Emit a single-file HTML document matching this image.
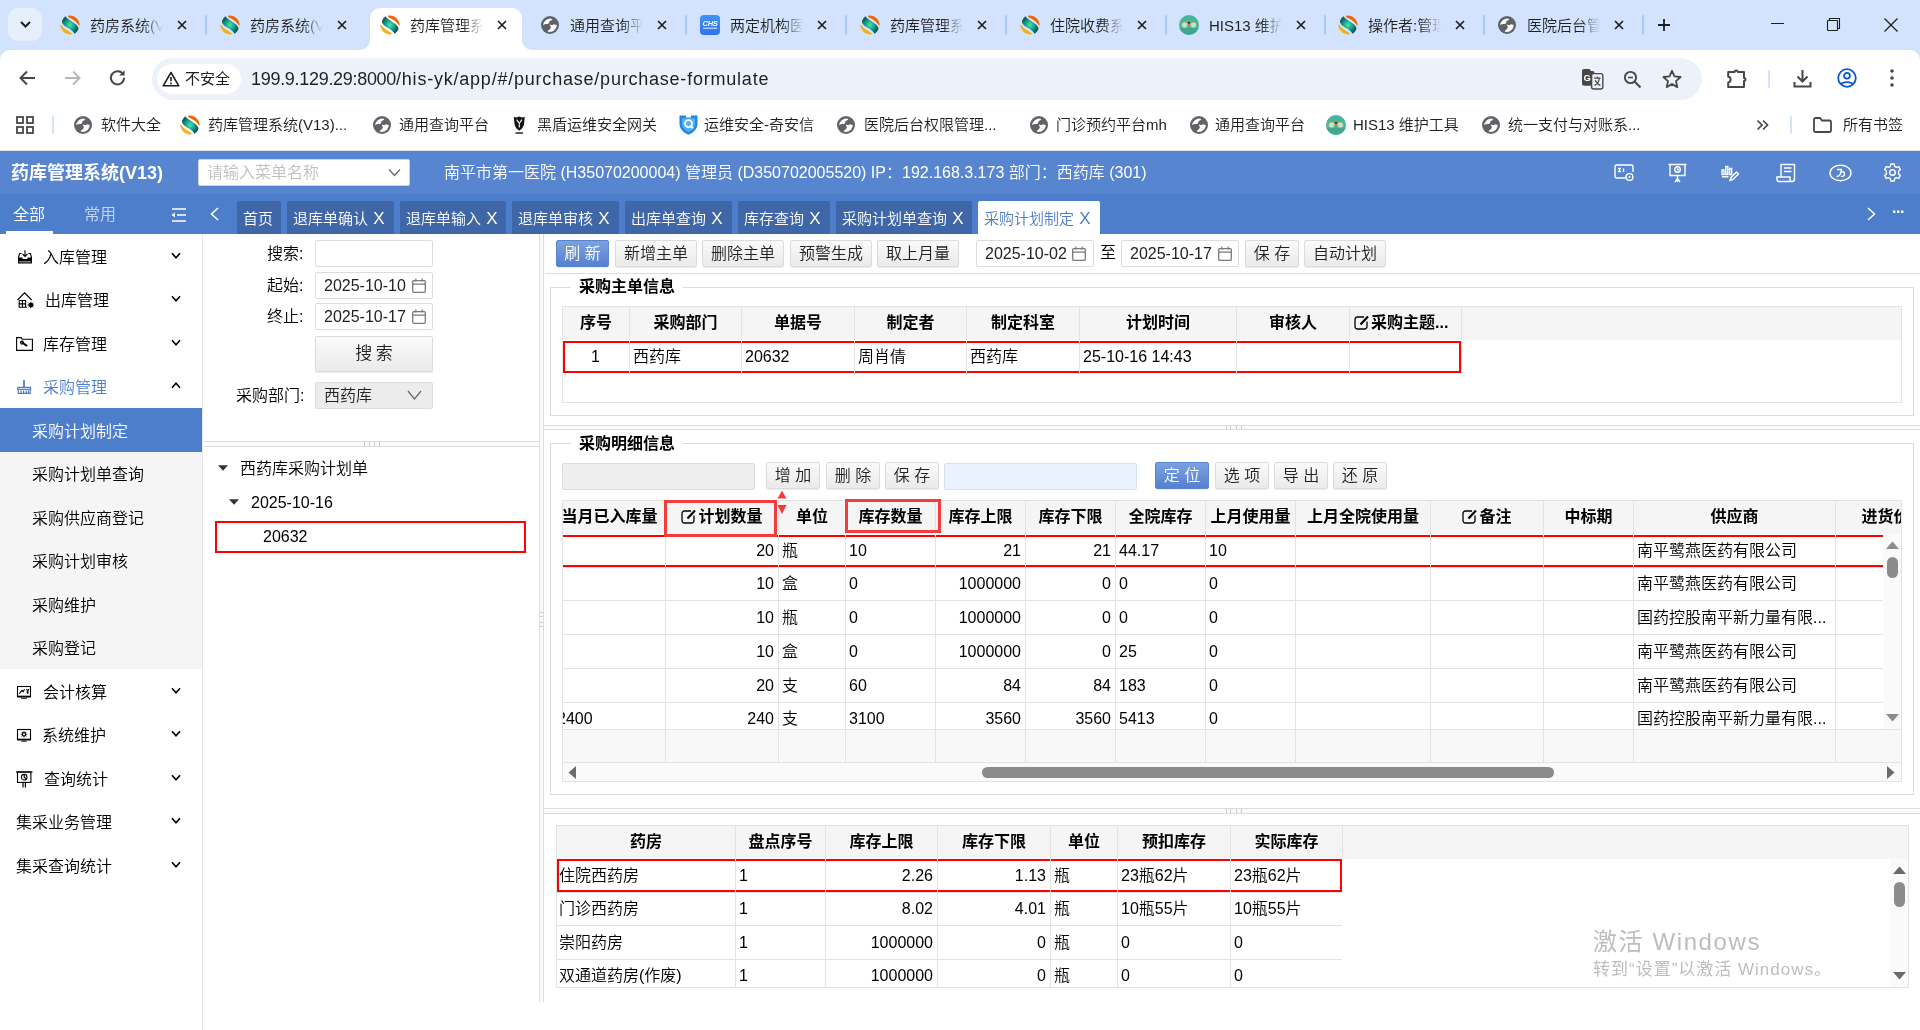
<!DOCTYPE html>
<html lang="zh-CN">
<head>
<meta charset="utf-8">
<title>药库管理系统(V13)</title>
<style>
*{box-sizing:border-box;margin:0;padding:0}
html,body{width:1920px;height:1030px;overflow:hidden;background:#fff}
body{position:relative;font-family:"Liberation Sans","Noto Sans CJK SC",sans-serif;font-size:16px;color:#000;font-weight:350}
.abs{position:absolute}
.t{position:absolute;white-space:nowrap;line-height:20px}
svg{position:absolute;overflow:visible}
/* chrome */
#tabstrip{position:absolute;left:0;top:0;width:1920px;height:62px;background:#d3e3fd}
#toolbar{position:absolute;left:0;top:50px;width:1920px;height:101px;background:#fff;border-top-left-radius:10px;border-top-right-radius:10px}
.ctab{position:absolute;top:0;height:50px;font-size:15px;color:#1f1f1f;font-weight:350}
.ctab .ti{position:absolute;top:16px;left:30px;width:73px;height:20px;line-height:20px;overflow:hidden;white-space:nowrap;-webkit-mask-image:linear-gradient(90deg,#000 72%,transparent 100%);mask-image:linear-gradient(90deg,#000 72%,transparent 100%)}
.sep{position:absolute;top:15px;width:2px;height:20px;background:#a8c7fa;border-radius:1px}
.bm{position:absolute;top:115px;height:20px;line-height:20px;font-size:15px;color:#1f1f1f;white-space:nowrap;font-weight:350}
/* app */
#hdr{position:absolute;left:0;top:151px;width:1920px;height:43px;background:#5885d0}
#tabbar{position:absolute;left:0;top:194px;width:1920px;height:40px;background:#4d7ecb}
.atab{position:absolute;top:201px;height:33px;background:#3f67a8;color:#fff;font-size:15px;line-height:35px;white-space:nowrap;padding-left:6px;border-radius:2px 2px 0 0}
.atab.on{background:#fff;color:#4d7ecb}
#side{position:absolute;left:0;top:234px;width:203px;height:796px;background:#fff;border-right:1px solid #e6e6e6}
.mi{position:absolute;left:0;width:202px;height:43px;line-height:43px;font-size:16px;color:#000;white-space:nowrap}
.mi .tx{position:absolute;left:43px;top:0}
.smi{position:absolute;left:0;width:202px;height:43px;line-height:43px;font-size:16px;padding-left:32px;white-space:nowrap}
.btn{position:absolute;height:27px;line-height:25px;border:1px solid #dcdcdc;border-radius:2px;background:linear-gradient(#fafafa,#eaeaea);font-size:16px;color:#222;text-align:center;white-space:nowrap;box-shadow:0 1px 1px rgba(0,0,0,.08)}
.btn.pri{background:linear-gradient(#7ba1e1,#5481ce);border-color:#5a85cf;color:#fff}
.inp{position:absolute;height:27px;line-height:25px;border:1px solid #dcdcdc;border-radius:2px;background:#fff;font-size:16px;color:#222;padding-left:8px;white-space:nowrap}
.th{position:absolute;top:0;height:100%;font-weight:700;text-align:center;border-right:1px solid #e3e3e3;white-space:nowrap;overflow:hidden;color:#000}
.td{position:absolute;top:0;height:100%;border-right:1px solid #e3e3e3;white-space:nowrap;overflow:hidden;padding:0 4px 0 3px}
.r{text-align:right}
.row{position:absolute;left:0;border-bottom:1px solid #e3e3e3}
</style>
</head>
<body>
<div id="root" style="position:absolute;left:0;top:0;width:1920px;height:1030px;will-change:transform">
<div id="tabstrip"></div>
<div class="abs" style="left:8px;top:8px;width:34px;height:33px;border-radius:10px;background:#e6eefc"></div>
<svg style="left:19px;top:20px" width="13" height="9" viewBox="0 0 13 9"><path d="M2 2 L6.5 6.5 L11 2" stroke="#1f1f1f" stroke-width="2" fill="none"/></svg>
<div class="abs" style="left:370px;top:8px;width:152px;height:42px;background:#fff;border-radius:10px 10px 0 0"></div>
<svg style="left:360px;top:40px" width="10" height="10" viewBox="0 0 10 10"><path d="M10 0 V10 H0 A10 10 0 0 0 10 0Z" fill="#fff"/></svg>
<svg style="left:522px;top:40px" width="10" height="10" viewBox="0 0 10 10"><path d="M0 0 V10 H10 A10 10 0 0 1 0 0Z" fill="#fff"/></svg>
<svg style="left:60px;top:15px" width="20" height="20" viewBox="0 0 20 20"><defs><radialGradient id="g0" cx="49%" cy="50%" r="52%"><stop offset="0" stop-color="#46e6b4"/><stop offset="0.45" stop-color="#1fa88e"/><stop offset="1" stop-color="#065560"/></radialGradient></defs><path d="M7.6 0.9 C12 -0.6 18.5 2.5 19.7 9.2 L19.2 11 C18 8.5 15.5 6 11 3.6 C9.5 2.8 8.2 2 7.6 0.9Z" fill="#ef6606"/><path d="M12.4 19.1 C8 20.6 1.5 17.5 0.3 10.8 L0.8 9 C2 11.5 4.5 14 9 16.4 C10.5 17.2 11.8 18 12.4 19.1Z" fill="#f4b01c"/><path d="M5.7 1.3 C6.2 3 8 4.2 11.7 6.4 C15 8.3 17.8 10 18.5 13.2 C18 15.5 16.5 17.5 14.3 18.7 C14 17 12 15.5 8.7 13.2 C5.5 11.5 2.5 10 1.9 6.4 C2.5 4.5 3.8 2.5 5.7 1.3Z" fill="url(#g0)"/></svg>
<div class="ctab" style="left:60px;width:140px"><div class="ti">药房系统(V13)</div></div>
<svg style="left:177px;top:20px" width="10" height="10" viewBox="0 0 10 10"><path d="M1 1 L9 9 M9 1 L1 9" stroke="#1f1f1f" stroke-width="1.7" fill="none"/></svg>
<svg style="left:220px;top:15px" width="20" height="20" viewBox="0 0 20 20"><defs><radialGradient id="g1" cx="49%" cy="50%" r="52%"><stop offset="0" stop-color="#46e6b4"/><stop offset="0.45" stop-color="#1fa88e"/><stop offset="1" stop-color="#065560"/></radialGradient></defs><path d="M7.6 0.9 C12 -0.6 18.5 2.5 19.7 9.2 L19.2 11 C18 8.5 15.5 6 11 3.6 C9.5 2.8 8.2 2 7.6 0.9Z" fill="#ef6606"/><path d="M12.4 19.1 C8 20.6 1.5 17.5 0.3 10.8 L0.8 9 C2 11.5 4.5 14 9 16.4 C10.5 17.2 11.8 18 12.4 19.1Z" fill="#f4b01c"/><path d="M5.7 1.3 C6.2 3 8 4.2 11.7 6.4 C15 8.3 17.8 10 18.5 13.2 C18 15.5 16.5 17.5 14.3 18.7 C14 17 12 15.5 8.7 13.2 C5.5 11.5 2.5 10 1.9 6.4 C2.5 4.5 3.8 2.5 5.7 1.3Z" fill="url(#g1)"/></svg>
<div class="ctab" style="left:220px;width:140px"><div class="ti">药房系统(V13)</div></div>
<svg style="left:337px;top:20px" width="10" height="10" viewBox="0 0 10 10"><path d="M1 1 L9 9 M9 1 L1 9" stroke="#1f1f1f" stroke-width="1.7" fill="none"/></svg>
<svg style="left:380px;top:15px" width="20" height="20" viewBox="0 0 20 20"><defs><radialGradient id="g2" cx="49%" cy="50%" r="52%"><stop offset="0" stop-color="#46e6b4"/><stop offset="0.45" stop-color="#1fa88e"/><stop offset="1" stop-color="#065560"/></radialGradient></defs><path d="M7.6 0.9 C12 -0.6 18.5 2.5 19.7 9.2 L19.2 11 C18 8.5 15.5 6 11 3.6 C9.5 2.8 8.2 2 7.6 0.9Z" fill="#ef6606"/><path d="M12.4 19.1 C8 20.6 1.5 17.5 0.3 10.8 L0.8 9 C2 11.5 4.5 14 9 16.4 C10.5 17.2 11.8 18 12.4 19.1Z" fill="#f4b01c"/><path d="M5.7 1.3 C6.2 3 8 4.2 11.7 6.4 C15 8.3 17.8 10 18.5 13.2 C18 15.5 16.5 17.5 14.3 18.7 C14 17 12 15.5 8.7 13.2 C5.5 11.5 2.5 10 1.9 6.4 C2.5 4.5 3.8 2.5 5.7 1.3Z" fill="url(#g2)"/></svg>
<div class="ctab" style="left:380px;width:140px"><div class="ti">药库管理系统</div></div>
<svg style="left:497px;top:20px" width="10" height="10" viewBox="0 0 10 10"><path d="M1 1 L9 9 M9 1 L1 9" stroke="#1f1f1f" stroke-width="1.7" fill="none"/></svg>
<svg style="left:541px;top:16px" width="18" height="18" viewBox="0 0 18 18"><circle cx="9" cy="9" r="9" fill="#5f6368"/><path d="M2 9 C2.4 6 4.8 3.4 8.4 2.4 L11.4 3 C10.4 4.6 9.4 4.6 8.6 5.2 C7.8 5.9 8.6 6.8 7.6 7.6 C6.4 8.4 4.4 7.8 2 9Z" fill="#fff"/><path d="M6.6 15.4 C7.4 13.4 9.6 13.6 9.8 11.6 C9.9 10.2 8.6 9.6 8.8 8.6 C10 9.2 11.8 9.4 12.8 8.2 L15.8 9 C15.6 12.8 12.4 16 8.6 16Z" fill="#fff"/></svg>
<div class="ctab" style="left:540px;width:140px"><div class="ti">通用查询平台</div></div>
<svg style="left:657px;top:20px" width="10" height="10" viewBox="0 0 10 10"><path d="M1 1 L9 9 M9 1 L1 9" stroke="#1f1f1f" stroke-width="1.7" fill="none"/></svg>
<svg style="left:700px;top:15px" width="20" height="20" viewBox="0 0 20 20"><defs><linearGradient id="lg700" x1="0" y1="0" x2="0" y2="1"><stop offset="0" stop-color="#3f93f7"/><stop offset="1" stop-color="#3271ea"/></linearGradient></defs><rect x="0" y="0" width="20" height="20" rx="4" fill="url(#lg700)"/><text x="10" y="10.6" text-anchor="middle" font-family="Liberation Sans,sans-serif" font-size="7.5" font-weight="700" font-style="italic" fill="#fff" letter-spacing="-0.3">CHS</text><rect x="3" y="12.6" width="14" height="1.4" fill="#cfe2ff" opacity="0.8"/></svg>
<div class="ctab" style="left:700px;width:140px"><div class="ti">两定机构医保</div></div>
<svg style="left:817px;top:20px" width="10" height="10" viewBox="0 0 10 10"><path d="M1 1 L9 9 M9 1 L1 9" stroke="#1f1f1f" stroke-width="1.7" fill="none"/></svg>
<svg style="left:860px;top:15px" width="20" height="20" viewBox="0 0 20 20"><defs><radialGradient id="g5" cx="49%" cy="50%" r="52%"><stop offset="0" stop-color="#46e6b4"/><stop offset="0.45" stop-color="#1fa88e"/><stop offset="1" stop-color="#065560"/></radialGradient></defs><path d="M7.6 0.9 C12 -0.6 18.5 2.5 19.7 9.2 L19.2 11 C18 8.5 15.5 6 11 3.6 C9.5 2.8 8.2 2 7.6 0.9Z" fill="#ef6606"/><path d="M12.4 19.1 C8 20.6 1.5 17.5 0.3 10.8 L0.8 9 C2 11.5 4.5 14 9 16.4 C10.5 17.2 11.8 18 12.4 19.1Z" fill="#f4b01c"/><path d="M5.7 1.3 C6.2 3 8 4.2 11.7 6.4 C15 8.3 17.8 10 18.5 13.2 C18 15.5 16.5 17.5 14.3 18.7 C14 17 12 15.5 8.7 13.2 C5.5 11.5 2.5 10 1.9 6.4 C2.5 4.5 3.8 2.5 5.7 1.3Z" fill="url(#g5)"/></svg>
<div class="ctab" style="left:860px;width:140px"><div class="ti">药库管理系统</div></div>
<svg style="left:977px;top:20px" width="10" height="10" viewBox="0 0 10 10"><path d="M1 1 L9 9 M9 1 L1 9" stroke="#1f1f1f" stroke-width="1.7" fill="none"/></svg>
<svg style="left:1020px;top:15px" width="20" height="20" viewBox="0 0 20 20"><defs><radialGradient id="g6" cx="49%" cy="50%" r="52%"><stop offset="0" stop-color="#46e6b4"/><stop offset="0.45" stop-color="#1fa88e"/><stop offset="1" stop-color="#065560"/></radialGradient></defs><path d="M7.6 0.9 C12 -0.6 18.5 2.5 19.7 9.2 L19.2 11 C18 8.5 15.5 6 11 3.6 C9.5 2.8 8.2 2 7.6 0.9Z" fill="#ef6606"/><path d="M12.4 19.1 C8 20.6 1.5 17.5 0.3 10.8 L0.8 9 C2 11.5 4.5 14 9 16.4 C10.5 17.2 11.8 18 12.4 19.1Z" fill="#f4b01c"/><path d="M5.7 1.3 C6.2 3 8 4.2 11.7 6.4 C15 8.3 17.8 10 18.5 13.2 C18 15.5 16.5 17.5 14.3 18.7 C14 17 12 15.5 8.7 13.2 C5.5 11.5 2.5 10 1.9 6.4 C2.5 4.5 3.8 2.5 5.7 1.3Z" fill="url(#g6)"/></svg>
<div class="ctab" style="left:1020px;width:140px"><div class="ti">住院收费系统</div></div>
<svg style="left:1137px;top:20px" width="10" height="10" viewBox="0 0 10 10"><path d="M1 1 L9 9 M9 1 L1 9" stroke="#1f1f1f" stroke-width="1.7" fill="none"/></svg>
<svg style="left:1179px;top:15px" width="20" height="20" viewBox="0 0 20 20"><circle cx="10" cy="10" r="10" fill="#45b59b"/><path d="M0.6 13 A10 10 0 0 0 19.4 13Z" fill="#3ea88f"/><path d="M7 8 H13 V10.5 H7Z" fill="#e8742a"/><path d="M9 7 H11 V8.4 H9Z" fill="#222"/><circle cx="5.6" cy="10" r="3" fill="#a4f0e2" stroke="#d98a3a" stroke-width="0.7"/><circle cx="14.4" cy="10" r="3" fill="#a4f0e2" stroke="#d98a3a" stroke-width="0.7"/></svg>
<div class="ctab" style="left:1179px;width:140px"><div class="ti">HIS13 维护</div></div>
<svg style="left:1296px;top:20px" width="10" height="10" viewBox="0 0 10 10"><path d="M1 1 L9 9 M9 1 L1 9" stroke="#1f1f1f" stroke-width="1.7" fill="none"/></svg>
<svg style="left:1338px;top:15px" width="20" height="20" viewBox="0 0 20 20"><defs><radialGradient id="g8" cx="49%" cy="50%" r="52%"><stop offset="0" stop-color="#46e6b4"/><stop offset="0.45" stop-color="#1fa88e"/><stop offset="1" stop-color="#065560"/></radialGradient></defs><path d="M7.6 0.9 C12 -0.6 18.5 2.5 19.7 9.2 L19.2 11 C18 8.5 15.5 6 11 3.6 C9.5 2.8 8.2 2 7.6 0.9Z" fill="#ef6606"/><path d="M12.4 19.1 C8 20.6 1.5 17.5 0.3 10.8 L0.8 9 C2 11.5 4.5 14 9 16.4 C10.5 17.2 11.8 18 12.4 19.1Z" fill="#f4b01c"/><path d="M5.7 1.3 C6.2 3 8 4.2 11.7 6.4 C15 8.3 17.8 10 18.5 13.2 C18 15.5 16.5 17.5 14.3 18.7 C14 17 12 15.5 8.7 13.2 C5.5 11.5 2.5 10 1.9 6.4 C2.5 4.5 3.8 2.5 5.7 1.3Z" fill="url(#g8)"/></svg>
<div class="ctab" style="left:1338px;width:140px"><div class="ti">操作者:管理员</div></div>
<svg style="left:1455px;top:20px" width="10" height="10" viewBox="0 0 10 10"><path d="M1 1 L9 9 M9 1 L1 9" stroke="#1f1f1f" stroke-width="1.7" fill="none"/></svg>
<svg style="left:1498px;top:16px" width="18" height="18" viewBox="0 0 18 18"><circle cx="9" cy="9" r="9" fill="#5f6368"/><path d="M2 9 C2.4 6 4.8 3.4 8.4 2.4 L11.4 3 C10.4 4.6 9.4 4.6 8.6 5.2 C7.8 5.9 8.6 6.8 7.6 7.6 C6.4 8.4 4.4 7.8 2 9Z" fill="#fff"/><path d="M6.6 15.4 C7.4 13.4 9.6 13.6 9.8 11.6 C9.9 10.2 8.6 9.6 8.8 8.6 C10 9.2 11.8 9.4 12.8 8.2 L15.8 9 C15.6 12.8 12.4 16 8.6 16Z" fill="#fff"/></svg>
<div class="ctab" style="left:1497px;width:140px"><div class="ti">医院后台管理</div></div>
<svg style="left:1614px;top:20px" width="10" height="10" viewBox="0 0 10 10"><path d="M1 1 L9 9 M9 1 L1 9" stroke="#1f1f1f" stroke-width="1.7" fill="none"/></svg>
<div class="sep" style="left:205px"></div>
<div class="sep" style="left:685px"></div>
<div class="sep" style="left:845px"></div>
<div class="sep" style="left:1005px"></div>
<div class="sep" style="left:1165px"></div>
<div class="sep" style="left:1324px"></div>
<div class="sep" style="left:1483px"></div>
<div class="sep" style="left:1642px"></div>
<svg style="left:1657px;top:18px" width="14" height="14" viewBox="0 0 14 14"><path d="M7 1 V13 M1 7 H13" stroke="#1f1f1f" stroke-width="1.8" fill="none"/></svg>
<div class="abs" style="left:1771px;top:23px;width:13px;height:1px;background:#1f1f1f"></div>
<svg style="left:1827px;top:18px" width="13" height="13" viewBox="0 0 13 13"><rect x="0.5" y="2.5" width="10" height="10" rx="0.6" fill="none" stroke="#1f1f1f" stroke-width="1.1"/><path d="M2.5 2.5 V0.5 H12.5 V10.5 H10.5" fill="none" stroke="#1f1f1f" stroke-width="1.1"/></svg>
<svg style="left:1884px;top:18px" width="14" height="14" viewBox="0 0 14 14"><path d="M0.5 0.5 L13.5 13.5 M13.5 0.5 L0.5 13.5" stroke="#1f1f1f" stroke-width="1.3" fill="none"/></svg>
<div id="toolbar"></div>
<svg style="left:19px;top:70px" width="17" height="16" viewBox="0 0 17 16"><path d="M16 8 H2 M8 1.5 L1.5 8 L8 14.5" stroke="#474747" stroke-width="2" fill="none"/></svg>
<svg style="left:64px;top:70px" width="17" height="16" viewBox="0 0 17 16"><path d="M1 8 H15 M9 1.5 L15.5 8 L9 14.5" stroke="#b5b8bd" stroke-width="2" fill="none"/></svg>
<svg style="left:109px;top:69px" width="17" height="17" viewBox="0 0 17 17"><path d="M14.2 5.5 A6.6 6.6 0 1 0 15.1 8.8" stroke="#474747" stroke-width="2" fill="none"/><path d="M15.6 1.2 V6.6 H10.2Z" fill="#474747"/></svg>
<div class="abs" style="left:152px;top:58px;width:1550px;height:42px;border-radius:21px;background:#edf2fa"></div>
<div class="abs" style="left:157px;top:64px;width:84px;height:30px;border-radius:15px;background:#fff"></div>
<svg style="left:162px;top:71px" width="18" height="16" viewBox="0 0 18 16"><path d="M9 1.5 L16.8 14.8 H1.2Z" stroke="#1f1f1f" stroke-width="1.6" fill="none" stroke-linejoin="round"/><path d="M9 6 V10.2 M9 11.6 V13.2" stroke="#1f1f1f" stroke-width="1.6"/></svg>
<div class="t" style="left:185px;top:69px;font-size:15px;color:#1f1f1f;font-weight:400">不安全</div>
<div class="t" style="left:251px;top:67px;font-size:18px;line-height:24px;color:#1f1f1f;font-weight:400;"><span style="letter-spacing:-0.3px">199.9.129.29:8000</span><span style="letter-spacing:0.78px">/his-yk/app/#/purchase/purchase-formulate</span></div>
<svg style="left:1582px;top:69px" width="22" height="21" viewBox="0 0 22 21"><path d="M2 0 H7.5 L9 2 H10.5 A2 2 0 0 1 12.5 4 V14.5 L14.5 16.8 H2 A2 2 0 0 1 0 14.8 V2 A2 2 0 0 1 2 0Z" fill="#474747"/><text x="1.6" y="12.2" font-size="9.5" font-weight="700" fill="#fff" font-family="Liberation Sans,sans-serif">G</text><rect x="9.6" y="4.6" width="11.2" height="15.4" rx="2" fill="#edf2fa" stroke="#474747" stroke-width="1.4"/><path d="M12 9.2 H18.6 M15.3 7.6 V9.2 M12.6 16.4 C15.4 15 17 12.4 17.4 9.2 M13.2 11.2 C14.2 13.4 16.2 15.6 18.4 16.6" stroke="#474747" stroke-width="1.2" fill="none"/></svg>
<svg style="left:1623px;top:70px" width="19" height="19" viewBox="0 0 19 19"><circle cx="7.5" cy="7.5" r="5.6" stroke="#474747" stroke-width="1.9" fill="none"/><path d="M11.8 11.8 L17.5 17.5" stroke="#474747" stroke-width="2"/><path d="M5 7.5 H10" stroke="#474747" stroke-width="1.6"/></svg>
<svg style="left:1662px;top:69px" width="20" height="20" viewBox="0 0 20 20"><path d="M10 1.8 L12.5 7.4 L18.6 8 L14 12.1 L15.3 18.1 L10 15 L4.7 18.1 L6 12.1 L1.4 8 L7.5 7.4Z" stroke="#474747" stroke-width="1.8" fill="none" stroke-linejoin="round"/></svg>
<svg style="left:1726px;top:67px" width="22" height="22" viewBox="0 0 22 22"><path d="M2.2 5 H8.6 A1.6 1.6 0 0 1 11.8 5 H18 V11 A1.5 1.5 0 0 1 18 14 V20 H2.2 V15.4 C5.4 15.4 5.4 9.8 2.2 9.8 Z" stroke="#474747" stroke-width="2" fill="none" stroke-linejoin="round"/></svg>
<div class="abs" style="left:1768px;top:70px;width:2px;height:18px;background:#d3e3fd;border-radius:1px"></div>
<svg style="left:1793px;top:69px" width="19" height="19" viewBox="0 0 19 19"><path d="M9.5 1 V12 M4.5 7.5 L9.5 12.5 L14.5 7.5" stroke="#474747" stroke-width="2" fill="none"/><path d="M1.5 13 V17.5 H17.5 V13" stroke="#474747" stroke-width="2" fill="none"/></svg>
<svg style="left:1837px;top:68px" width="20" height="20" viewBox="0 0 20 20"><circle cx="10" cy="10" r="8.8" stroke="#0b57d0" stroke-width="1.8" fill="none"/><circle cx="10" cy="7.8" r="2.9" stroke="#0b57d0" stroke-width="1.8" fill="none"/><path d="M4 16.2 C5.5 13.4 14.5 13.4 16 16.2" stroke="#0b57d0" stroke-width="1.8" fill="none"/></svg>
<svg style="left:1890px;top:69px" width="4" height="18" viewBox="0 0 4 18"><circle cx="2" cy="2" r="1.8" fill="#474747"/><circle cx="2" cy="9" r="1.8" fill="#474747"/><circle cx="2" cy="16" r="1.8" fill="#474747"/></svg>
<svg style="left:16px;top:116px" width="18" height="18" viewBox="0 0 18 18"><g fill="none" stroke="#474747" stroke-width="1.8"><rect x="1" y="1" width="6" height="6"/><rect x="11" y="1" width="6" height="6"/><rect x="1" y="11" width="6" height="6"/><rect x="11" y="11" width="6" height="6"/></g></svg>
<div class="abs" style="left:52px;top:116px;width:2px;height:18px;background:#d3e3fd;border-radius:1px"></div>
<svg style="left:74px;top:116px" width="18" height="18" viewBox="0 0 18 18"><circle cx="9" cy="9" r="9" fill="#5f6368"/><path d="M2 9 C2.4 6 4.8 3.4 8.4 2.4 L11.4 3 C10.4 4.6 9.4 4.6 8.6 5.2 C7.8 5.9 8.6 6.8 7.6 7.6 C6.4 8.4 4.4 7.8 2 9Z" fill="#fff"/><path d="M6.6 15.4 C7.4 13.4 9.6 13.6 9.8 11.6 C9.9 10.2 8.6 9.6 8.8 8.6 C10 9.2 11.8 9.4 12.8 8.2 L15.8 9 C15.6 12.8 12.4 16 8.6 16Z" fill="#fff"/></svg>
<div class="bm" style="left:101px">软件大全</div>
<svg style="left:180px;top:115px" width="20" height="20" viewBox="0 0 20 20"><defs><radialGradient id="g21" cx="49%" cy="50%" r="52%"><stop offset="0" stop-color="#46e6b4"/><stop offset="0.45" stop-color="#1fa88e"/><stop offset="1" stop-color="#065560"/></radialGradient></defs><path d="M7.6 0.9 C12 -0.6 18.5 2.5 19.7 9.2 L19.2 11 C18 8.5 15.5 6 11 3.6 C9.5 2.8 8.2 2 7.6 0.9Z" fill="#ef6606"/><path d="M12.4 19.1 C8 20.6 1.5 17.5 0.3 10.8 L0.8 9 C2 11.5 4.5 14 9 16.4 C10.5 17.2 11.8 18 12.4 19.1Z" fill="#f4b01c"/><path d="M5.7 1.3 C6.2 3 8 4.2 11.7 6.4 C15 8.3 17.8 10 18.5 13.2 C18 15.5 16.5 17.5 14.3 18.7 C14 17 12 15.5 8.7 13.2 C5.5 11.5 2.5 10 1.9 6.4 C2.5 4.5 3.8 2.5 5.7 1.3Z" fill="url(#g21)"/></svg>
<div class="bm" style="left:208px">药库管理系统(V13)...</div>
<svg style="left:373px;top:116px" width="18" height="18" viewBox="0 0 18 18"><circle cx="9" cy="9" r="9" fill="#5f6368"/><path d="M2 9 C2.4 6 4.8 3.4 8.4 2.4 L11.4 3 C10.4 4.6 9.4 4.6 8.6 5.2 C7.8 5.9 8.6 6.8 7.6 7.6 C6.4 8.4 4.4 7.8 2 9Z" fill="#fff"/><path d="M6.6 15.4 C7.4 13.4 9.6 13.6 9.8 11.6 C9.9 10.2 8.6 9.6 8.8 8.6 C10 9.2 11.8 9.4 12.8 8.2 L15.8 9 C15.6 12.8 12.4 16 8.6 16Z" fill="#fff"/></svg>
<div class="bm" style="left:399px">通用查询平台</div>
<svg style="left:513px;top:116px" width="13" height="19" viewBox="0 0 13 19"><path d="M0.8 0.8 C2.8 2 4.8 1.4 6.3 0.6 C7.8 1.4 9.8 2 11.8 0.8 L11 8.6 C10.4 11.4 8.4 13.6 6.3 14.8 C4.2 13.6 2.2 11.4 1.6 8.6Z" fill="#111"/><path d="M3.6 3.6 L6.3 7.4 L9 3.6 M6.3 7.4 V11.6" stroke="#fff" stroke-width="1.1" fill="none"/><path d="M2.5 17 H10" stroke="#333" stroke-width="1.6"/></svg>
<div class="bm" style="left:537px">黑盾运维安全网关</div>
<svg style="left:679px;top:115px" width="19" height="20" viewBox="0 0 19 20"><path d="M0.5 0.5 H7 V2.4 H12 V0.5 H18.5 V9 C18.5 14 14 18 9.5 19.7 C5 18 0.5 14 0.5 9Z" fill="#1e88e5"/><path d="M3 3.2 H16 V9 C16 12.5 13 15.5 9.5 17 C6 15.5 3 12.5 3 9Z" fill="#55b0f5"/><circle cx="9.5" cy="8.6" r="3.5" stroke="#fff" stroke-width="1.8" fill="none"/><path d="M11.6 10.8 L14 13.4" stroke="#fff" stroke-width="1.8"/></svg>
<div class="bm" style="left:704px">运维安全-奇安信</div>
<svg style="left:837px;top:116px" width="18" height="18" viewBox="0 0 18 18"><circle cx="9" cy="9" r="9" fill="#5f6368"/><path d="M2 9 C2.4 6 4.8 3.4 8.4 2.4 L11.4 3 C10.4 4.6 9.4 4.6 8.6 5.2 C7.8 5.9 8.6 6.8 7.6 7.6 C6.4 8.4 4.4 7.8 2 9Z" fill="#fff"/><path d="M6.6 15.4 C7.4 13.4 9.6 13.6 9.8 11.6 C9.9 10.2 8.6 9.6 8.8 8.6 C10 9.2 11.8 9.4 12.8 8.2 L15.8 9 C15.6 12.8 12.4 16 8.6 16Z" fill="#fff"/></svg>
<div class="bm" style="left:864px">医院后台权限管理...</div>
<svg style="left:1030px;top:116px" width="18" height="18" viewBox="0 0 18 18"><circle cx="9" cy="9" r="9" fill="#5f6368"/><path d="M2 9 C2.4 6 4.8 3.4 8.4 2.4 L11.4 3 C10.4 4.6 9.4 4.6 8.6 5.2 C7.8 5.9 8.6 6.8 7.6 7.6 C6.4 8.4 4.4 7.8 2 9Z" fill="#fff"/><path d="M6.6 15.4 C7.4 13.4 9.6 13.6 9.8 11.6 C9.9 10.2 8.6 9.6 8.8 8.6 C10 9.2 11.8 9.4 12.8 8.2 L15.8 9 C15.6 12.8 12.4 16 8.6 16Z" fill="#fff"/></svg>
<div class="bm" style="left:1056px">门诊预约平台mh</div>
<svg style="left:1190px;top:116px" width="18" height="18" viewBox="0 0 18 18"><circle cx="9" cy="9" r="9" fill="#5f6368"/><path d="M2 9 C2.4 6 4.8 3.4 8.4 2.4 L11.4 3 C10.4 4.6 9.4 4.6 8.6 5.2 C7.8 5.9 8.6 6.8 7.6 7.6 C6.4 8.4 4.4 7.8 2 9Z" fill="#fff"/><path d="M6.6 15.4 C7.4 13.4 9.6 13.6 9.8 11.6 C9.9 10.2 8.6 9.6 8.8 8.6 C10 9.2 11.8 9.4 12.8 8.2 L15.8 9 C15.6 12.8 12.4 16 8.6 16Z" fill="#fff"/></svg>
<div class="bm" style="left:1215px">通用查询平台</div>
<svg style="left:1326px;top:115px" width="20" height="20" viewBox="0 0 20 20"><circle cx="10" cy="10" r="10" fill="#45b59b"/><path d="M0.6 13 A10 10 0 0 0 19.4 13Z" fill="#3ea88f"/><path d="M7 8 H13 V10.5 H7Z" fill="#e8742a"/><path d="M9 7 H11 V8.4 H9Z" fill="#222"/><circle cx="5.6" cy="10" r="3" fill="#a4f0e2" stroke="#d98a3a" stroke-width="0.7"/><circle cx="14.4" cy="10" r="3" fill="#a4f0e2" stroke="#d98a3a" stroke-width="0.7"/></svg>
<div class="bm" style="left:1353px">HIS13 维护工具</div>
<svg style="left:1482px;top:116px" width="18" height="18" viewBox="0 0 18 18"><circle cx="9" cy="9" r="9" fill="#5f6368"/><path d="M2 9 C2.4 6 4.8 3.4 8.4 2.4 L11.4 3 C10.4 4.6 9.4 4.6 8.6 5.2 C7.8 5.9 8.6 6.8 7.6 7.6 C6.4 8.4 4.4 7.8 2 9Z" fill="#fff"/><path d="M6.6 15.4 C7.4 13.4 9.6 13.6 9.8 11.6 C9.9 10.2 8.6 9.6 8.8 8.6 C10 9.2 11.8 9.4 12.8 8.2 L15.8 9 C15.6 12.8 12.4 16 8.6 16Z" fill="#fff"/></svg>
<div class="bm" style="left:1508px">统一支付与对账系...</div>
<svg style="left:1756px;top:119px" width="13" height="12" viewBox="0 0 13 12"><path d="M1.5 1.5 L6 6 L1.5 10.5 M7 1.5 L11.5 6 L7 10.5" stroke="#474747" stroke-width="1.7" fill="none"/></svg>
<div class="abs" style="left:1790px;top:116px;width:2px;height:18px;background:#d3e3fd;border-radius:1px"></div>
<svg style="left:1813px;top:117px" width="19" height="16" viewBox="0 0 19 16"><path d="M1 2.5 A1.5 1.5 0 0 1 2.5 1 H7 L9 3.5 H16.5 A1.5 1.5 0 0 1 18 5 V13.5 A1.5 1.5 0 0 1 16.5 15 H2.5 A1.5 1.5 0 0 1 1 13.5Z" stroke="#474747" stroke-width="1.8" fill="none"/></svg>
<div class="bm" style="left:1843px">所有书签</div>
<div class="abs" style="left:0;top:150px;width:1920px;height:1px;background:#dfe1e5"></div>
<div id="hdr"></div>
<div class="t" style="left:11px;top:161px;font-size:18px;line-height:24px;font-weight:700;color:#fff">药库管理系统(V13)</div>
<div class="abs" style="left:198px;top:159px;width:212px;height:27px;background:#fff;border:1px solid #d2d2d2;border-radius:2px"></div>
<div class="t" style="left:207px;top:163px;color:#c0c0c0;font-size:16px">请输入菜单名称</div>
<svg style="left:388px;top:168px" width="13" height="9" viewBox="0 0 13 9"><path d="M1 1.5 L6.5 7.5 L12 1.5" stroke="#666" stroke-width="1.2" fill="none"/></svg>
<div class="t" style="left:444px;top:163px;color:#fff;font-size:16px;letter-spacing:0px">南平市第一医院 (H35070200004) 管理员 (D350702005520) IP：192.168.3.173 部门：西药库 (301)</div>
<svg style="left:1614px;top:164px" width="20" height="18" viewBox="0 0 20 18"><path d="M12 14 H2.5 A1.5 1.5 0 0 1 1 12.5 V2.5 A1.5 1.5 0 0 1 2.5 1 H17.5 A1.5 1.5 0 0 1 19 2.5 V8" stroke="#fff" stroke-width="1.4" fill="none"/><path d="M4 4.5 H7 M4 7.5 H7 M5.5 4.5 V7.5 M9.5 4.5 V8" stroke="#fff" stroke-width="1.4" fill="none"/><circle cx="15.5" cy="13" r="3.4" stroke="#fff" stroke-width="1.4" fill="none"/><circle cx="15.5" cy="13" r="1" fill="#fff"/></svg>
<svg style="left:1668px;top:163px" width="19" height="20" viewBox="0 0 19 20"><path d="M0.5 1.5 H18.5 M2 1.5 V12.5 H17 V1.5 M9.5 12.5 V19 M7 19 L9.5 15.5 L12 19" stroke="#fff" stroke-width="1.4" fill="none"/><circle cx="9.5" cy="6.5" r="2.8" stroke="#fff" stroke-width="1.4" fill="none"/><path d="M9.5 5 V6.8 H11" stroke="#fff" stroke-width="1.4" fill="none"/></svg>
<svg style="left:1721px;top:164px" width="19" height="19" viewBox="0 0 19 19"><path d="M1 6 H3 V10.5 H1Z M4.8 2.5 H6.8 V10.5 H4.8Z M8.6 4.5 H10.6 V10.5 H8.6Z M1 12.8 H7.5" stroke="#fff" stroke-width="1.4" fill="none"/><path d="M9 16.5 L10 13.5 L15.5 8 L17.5 10 L12 15.5 Z" stroke="#fff" stroke-width="1.4" fill="none"/></svg>
<svg style="left:1776px;top:163px" width="20" height="20" viewBox="0 0 20 20"><path d="M5 14 V1.5 H18.5 V16 A2.5 2.5 0 0 1 16 18.5 H3 A2 2 0 0 1 1 16.5 V14 H14 V16.5 A2 2 0 0 0 16 18.5" stroke="#fff" stroke-width="1.4" fill="none"/><path d="M8 5 H15.5 M8 8.5 H15.5" stroke="#fff" stroke-width="1.4" fill="none"/></svg>
<svg style="left:1829px;top:164px" width="23" height="18" viewBox="0 0 23 18"><ellipse cx="11.5" cy="9" rx="10.5" ry="7.8" stroke="#fff" stroke-width="1.4" fill="none"/><path d="M8 5.5 H13 M7.5 12.5 C10.5 12.5 12 11 12.5 5.5 M11 8.5 C13 7 15.5 7.5 15.5 10 C15.5 12 13.5 13 12 12" stroke="#fff" stroke-width="1.4" fill="none"/></svg>
<svg style="left:1883px;top:163px" width="19" height="19" viewBox="0 0 19 19"><circle cx="9.5" cy="9.5" r="2.8" stroke="#fff" stroke-width="1.4" fill="none"/><path d="M7.8 1 H11.2 L11.7 3.4 L13.4 4.4 L15.7 3.6 L17.4 6.5 L15.6 8.1 V10.9 L17.4 12.5 L15.7 15.4 L13.4 14.6 L11.7 15.6 L11.2 18 H7.8 L7.3 15.6 L5.6 14.6 L3.3 15.4 L1.6 12.5 L3.4 10.9 V8.1 L1.6 6.5 L3.3 3.6 L5.6 4.4 L7.3 3.4Z" stroke="#fff" stroke-width="1.4" fill="none" stroke-linejoin="round"/></svg>
<div id="tabbar"></div>
<div class="t" style="left:13px;top:205px;color:#fff;font-size:16px">全部</div>
<div class="t" style="left:84px;top:205px;color:#c9d8f0;font-size:16px">常用</div>
<div class="abs" style="left:6px;top:231px;width:47px;height:3px;background:#fff"></div>
<svg style="left:171px;top:208px" width="16" height="14" viewBox="0 0 16 14"><path d="M1 1 H15 M6 7 H15 M1 13 H15" stroke="#fff" stroke-width="1.6" fill="none"/><path d="M0.5 7 L4 4.5 V9.5Z" fill="#fff"/></svg>
<svg style="left:210px;top:207px" width="9" height="14" viewBox="0 0 9 14"><path d="M8 1 L1.5 7 L8 13" stroke="#fff" stroke-width="1.5" fill="none"/></svg>
<div class="atab" style="left:237px;width:44px">首页</div>
<div class="atab" style="left:287px;width:107px">退库单确认 <span style="font-size:17px;margin-left:1px">X</span></div>
<div class="atab" style="left:400px;width:106px">退库单输入 <span style="font-size:17px;margin-left:1px">X</span></div>
<div class="atab" style="left:512px;width:107px">退库单审核 <span style="font-size:17px;margin-left:1px">X</span></div>
<div class="atab" style="left:625px;width:107px">出库单查询 <span style="font-size:17px;margin-left:1px">X</span></div>
<div class="atab" style="left:738px;width:92px">库存查询 <span style="font-size:17px;margin-left:1px">X</span></div>
<div class="atab" style="left:836px;width:136px">采购计划单查询 <span style="font-size:17px;margin-left:1px">X</span></div>
<div class="atab on" style="left:978px;width:122px">采购计划制定 <span style="font-size:17px;margin-left:1px">X</span></div>
<svg style="left:1867px;top:207px" width="9" height="14" viewBox="0 0 9 14"><path d="M1 1 L7.5 7 L1 13" stroke="#fff" stroke-width="1.5" fill="none"/></svg>
<div class="t" style="left:1892px;top:202px;color:#fff;font-size:16px;letter-spacing:-1.3px;font-weight:700">···</div>
<div id="side"></div>
<div class="abs" style="left:0;top:408px;width:202px;height:261px;background:#f5f5f5"></div>
<div class="abs" style="left:0;top:408px;width:202px;height:44px;background:#4d7ecb"></div>
<div class="t" style="left:43px;top:248px;color:#000">入库管理</div>
<svg style="left:171px;top:252px" width="10" height="7" viewBox="0 0 10 7"><path d="M1 1.2 L5 5.8 L9 1.2" stroke="#000" stroke-width="1.6" fill="none"/></svg>
<div class="t" style="left:45px;top:291px;color:#000">出库管理</div>
<svg style="left:171px;top:295px" width="10" height="7" viewBox="0 0 10 7"><path d="M1 1.2 L5 5.8 L9 1.2" stroke="#000" stroke-width="1.6" fill="none"/></svg>
<div class="t" style="left:43px;top:335px;color:#000">库存管理</div>
<svg style="left:171px;top:339px" width="10" height="7" viewBox="0 0 10 7"><path d="M1 1.2 L5 5.8 L9 1.2" stroke="#000" stroke-width="1.6" fill="none"/></svg>
<div class="t" style="left:43px;top:378px;color:#4d7ecb">采购管理</div>
<svg style="left:171px;top:382px" width="10" height="7" viewBox="0 0 10 7"><path d="M1 5.8 L5 1.2 L9 5.8" stroke="#000" stroke-width="1.6" fill="none"/></svg>
<div class="t" style="left:43px;top:683px;color:#000">会计核算</div>
<svg style="left:171px;top:687px" width="10" height="7" viewBox="0 0 10 7"><path d="M1 1.2 L5 5.8 L9 1.2" stroke="#000" stroke-width="1.6" fill="none"/></svg>
<div class="t" style="left:42px;top:726px;color:#000">系统维护</div>
<svg style="left:171px;top:730px" width="10" height="7" viewBox="0 0 10 7"><path d="M1 1.2 L5 5.8 L9 1.2" stroke="#000" stroke-width="1.6" fill="none"/></svg>
<div class="t" style="left:44px;top:770px;color:#000">查询统计</div>
<svg style="left:171px;top:774px" width="10" height="7" viewBox="0 0 10 7"><path d="M1 1.2 L5 5.8 L9 1.2" stroke="#000" stroke-width="1.6" fill="none"/></svg>
<div class="t" style="left:16px;top:813px;color:#000">集采业务管理</div>
<svg style="left:171px;top:817px" width="10" height="7" viewBox="0 0 10 7"><path d="M1 1.2 L5 5.8 L9 1.2" stroke="#000" stroke-width="1.6" fill="none"/></svg>
<div class="t" style="left:16px;top:857px;color:#000">集采查询统计</div>
<svg style="left:171px;top:861px" width="10" height="7" viewBox="0 0 10 7"><path d="M1 1.2 L5 5.8 L9 1.2" stroke="#000" stroke-width="1.6" fill="none"/></svg>
<div class="t" style="left:32px;top:422px;color:#fff">采购计划制定</div>
<div class="t" style="left:32px;top:465px;color:#000">采购计划单查询</div>
<div class="t" style="left:32px;top:509px;color:#000">采购供应商登记</div>
<div class="t" style="left:32px;top:552px;color:#000">采购计划审核</div>
<div class="t" style="left:32px;top:596px;color:#000">采购维护</div>
<div class="t" style="left:32px;top:639px;color:#000">采购登记</div>
<svg style="left:18px;top:250px" width="14" height="14" viewBox="0 0 14 14"><path d="M3.5 3.5 H1.6 L0.6 7 V12.9 H13.4 V7 L12.4 3.5 H10.5" stroke="#000" stroke-width="1.1" fill="none"/><path d="M7 0.3 V6.2 M4.6 4 L7 6.4 L9.4 4" stroke="#000" stroke-width="1.1" fill="none"/><path d="M0.6 7.5 H4 L5 9 H9 L10 7.5 H13.4 V11.6 H0.6Z" fill="#000"/></svg>
<svg style="left:17px;top:292px" width="18" height="16" viewBox="0 0 18 16"><path d="M0.5 8 L7.6 0.8 L14.7 8" stroke="#000" stroke-width="1.1" fill="none"/><path d="M2.2 8.5 V15.3 H10 M2.2 8.5 H8.6 V15.3 M5.4 8.5 V15.3 M2.2 11.9 H8.6" stroke="#000" stroke-width="1.1" fill="none"/><circle cx="13.8" cy="13" r="2.3" fill="#000"/><circle cx="13.8" cy="13" r="0.9" fill="#fff"/><path d="M13.8 9.8 V16.2 M10.6 13 H17 M11.5 10.7 L16.1 15.3 M16.1 10.7 L11.5 15.3" stroke="#000" stroke-width="1" fill="none"/></svg>
<svg style="left:16px;top:337px" width="17" height="14" viewBox="0 0 17 14"><path d="M0.6 2.2 V13.4 H16.4 V2.2 H6.2 L5.2 0.6 H0.6 V2.2" stroke="#000" stroke-width="1.1" fill="none"/><path d="M5 5.8 L6.6 4.8 L11.8 8.2 L10.4 9.8 Z" fill="#000"/><circle cx="6" cy="5.6" r="1.5" stroke="#000" stroke-width="1.1" fill="none"/></svg>
<svg style="left:17px;top:380px" width="15" height="14" viewBox="0 0 15 14"><path d="M7 0 V7" stroke="#4d7ecb" stroke-width="1.8" fill="none"/><path d="M0.8 7.4 H13.6 V9.3 H0.8Z" stroke="#4d7ecb" stroke-width="1.2" fill="none"/><path d="M1.3 9.5 V13.3 H13.2 V9.5 M4 10.5 V13 M6.6 10.5 V13 M9.2 10.5 V13 M11.4 10.5 V13" stroke="#4d7ecb" stroke-width="1.2" fill="none"/></svg>
<svg style="left:17px;top:686px" width="15" height="13" viewBox="0 0 15 13"><rect x="0.5" y="0.5" width="13" height="10" stroke="#000" stroke-width="1.1" fill="none"/><path d="M0.5 10.6 H13.5" stroke="#000" stroke-width="1.8"/><path d="M4 12.2 H10" stroke="#000" stroke-width="1"/><path d="M2.3 7.6 L5 4.4 L6 5.8 L7.6 3.2 M9.4 3.2 L10.7 4.8 L12 3.2 M10.7 4.8 V8 M9.5 6 H11.9" stroke="#000" stroke-width="1.1" fill="none"/></svg>
<svg style="left:17px;top:729px" width="15" height="13" viewBox="0 0 15 13"><rect x="0.5" y="0.5" width="13" height="10" stroke="#000" stroke-width="1.1" fill="none"/><path d="M0.5 10.6 H13.5" stroke="#000" stroke-width="1.8"/><path d="M4.5 12.2 H9.5" stroke="#000" stroke-width="1"/><circle cx="7" cy="5.3" r="1.7" stroke="#000" stroke-width="1.1" fill="none"/><path d="M7 2.2 V8.4 M3.9 5.3 H10.1 M4.8 3.1 L9.2 7.5 M9.2 3.1 L4.8 7.5" stroke="#000" stroke-width="0.9" fill="none"/><circle cx="7" cy="5.3" r="1" fill="#fff"/></svg>
<svg style="left:16px;top:771px" width="17" height="17" viewBox="0 0 17 17"><path d="M0 1 H16.5" stroke="#000" stroke-width="1.2"/><rect x="1.5" y="1" width="13.4" height="10.4" stroke="#000" stroke-width="1.1" fill="none"/><circle cx="8.2" cy="6.2" r="2.8" stroke="#000" stroke-width="1.1" fill="none"/><path d="M8.2 3.4 V6.2 L10.4 8" stroke="#000" stroke-width="1.1" fill="none"/><path d="M7 11.4 V16.4 M9.4 11.4 V16.4" stroke="#000" stroke-width="1.2"/></svg>
<div class="t" style="left:267px;top:244px">搜索:</div>
<div class="inp" style="left:315px;top:240px;width:118px"></div>
<div class="t" style="left:267px;top:276px">起始:</div>
<div class="inp" style="left:315px;top:272px;width:118px">2025-10-10</div>
<svg style="left:412px;top:278px" width="14" height="15" viewBox="0 0 14 15"><rect x="0.7" y="2.6" width="12.6" height="11.7" rx="1" stroke="#7a7a7a" stroke-width="1.3" fill="none"/><path d="M0.7 6.2 H13.3 M3.8 0.5 V3.6 M10.2 0.5 V3.6" stroke="#7a7a7a" stroke-width="1.3" fill="none"/></svg>
<div class="t" style="left:267px;top:307px">终止:</div>
<div class="inp" style="left:315px;top:303px;width:118px">2025-10-17</div>
<svg style="left:412px;top:309px" width="14" height="15" viewBox="0 0 14 15"><rect x="0.7" y="2.6" width="12.6" height="11.7" rx="1" stroke="#7a7a7a" stroke-width="1.3" fill="none"/><path d="M0.7 6.2 H13.3 M3.8 0.5 V3.6 M10.2 0.5 V3.6" stroke="#7a7a7a" stroke-width="1.3" fill="none"/></svg>
<div class="btn" style="left:315px;top:336px;width:118px;height:36px;line-height:34px;font-size:17px;word-spacing:-1px">搜 索</div>
<div class="t" style="left:236px;top:386px">采购部门:</div>
<div class="inp" style="left:315px;top:382px;width:118px;background:#ececec">西药库</div>
<svg style="left:407px;top:390px" width="15" height="10" viewBox="0 0 15 10"><path d="M1 1 L7.5 9 L14 1" stroke="#666" stroke-width="1.2" fill="none"/></svg>
<div class="abs" style="left:204px;top:441px;width:335px;height:6px;border-top:1px solid #dcdcdc;border-bottom:1px solid #dcdcdc;background:#fafafa"></div>
<div class="abs" style="left:364px;top:442px;width:16px;height:4px;border-left:1px solid #ccc;border-right:1px solid #ccc"></div><div class="abs" style="left:369px;top:442px;width:6px;height:4px;border-left:1px solid #ccc;border-right:1px solid #ccc"></div>
<svg style="left:218px;top:465px" width="10" height="6" viewBox="0 0 10 6"><path d="M0 0.3 H10 L5 5.8Z" fill="#333"/></svg>
<div class="t" style="left:240px;top:459px">西药库采购计划单</div>
<svg style="left:229px;top:499px" width="10" height="6" viewBox="0 0 10 6"><path d="M0 0.3 H10 L5 5.8Z" fill="#333"/></svg>
<div class="t" style="left:251px;top:493px">2025-10-16</div>
<div class="abs" style="left:215px;top:521px;width:311px;height:32px;border:2px solid #f00"></div>
<div class="t" style="left:263px;top:527px">20632</div>
<div class="abs" style="left:539px;top:234px;width:5px;height:768px;border-left:1px solid #dcdcdc;border-right:1px solid #dcdcdc;background:#fafafa"></div>
<div class="abs" style="left:540px;top:612px;width:3px;height:15px;border-top:1px solid #ccc;border-bottom:1px solid #ccc"></div><div class="abs" style="left:540px;top:616px;width:3px;height:7px;border-top:1px solid #ccc;border-bottom:1px solid #ccc"></div>
<div class="btn pri" style="left:556px;top:240px;width:53px">刷 新</div>
<div class="btn" style="left:615px;top:240px;width:82px">新增主单</div>
<div class="btn" style="left:702px;top:240px;width:82px">删除主单</div>
<div class="btn" style="left:790px;top:240px;width:82px">预警生成</div>
<div class="btn" style="left:877px;top:240px;width:82px">取上月量</div>
<div class="inp" style="left:976px;top:240px;width:118px">2025-10-02</div>
<svg style="left:1072px;top:246px" width="14" height="15" viewBox="0 0 14 15"><rect x="0.7" y="2.6" width="12.6" height="11.7" rx="1" stroke="#7a7a7a" stroke-width="1.3" fill="none"/><path d="M0.7 6.2 H13.3 M3.8 0.5 V3.6 M10.2 0.5 V3.6" stroke="#7a7a7a" stroke-width="1.3" fill="none"/></svg>
<div class="t" style="left:1100px;top:243px">至</div>
<div class="inp" style="left:1121px;top:240px;width:118px">2025-10-17</div>
<svg style="left:1218px;top:246px" width="14" height="15" viewBox="0 0 14 15"><rect x="0.7" y="2.6" width="12.6" height="11.7" rx="1" stroke="#7a7a7a" stroke-width="1.3" fill="none"/><path d="M0.7 6.2 H13.3 M3.8 0.5 V3.6 M10.2 0.5 V3.6" stroke="#7a7a7a" stroke-width="1.3" fill="none"/></svg>
<div class="btn" style="left:1245px;top:240px;width:54px">保 存</div>
<div class="btn" style="left:1304px;top:240px;width:82px">自动计划</div>
<div class="abs" style="left:545px;top:273px;width:1375px;height:1px;background:#dcdcdc"></div>
<div class="abs" style="left:550px;top:287px;width:1364px;height:129px;border:1px solid #dcdcdc"></div>
<div class="t" style="left:571px;top:277px;padding:0 8px;background:#fff;font-weight:700">采购主单信息</div>
<div class="abs" style="left:562px;top:306px;width:1340px;height:97px;border:1px solid #e3e3e3;background:#fff"></div>
<div class="abs" style="left:563px;top:307px;width:1338px;height:33px;background:#f5f5f5;line-height:32px">
<div class="th" style="left:0px;width:67px">序号</div>
<div class="th" style="left:67px;width:112px">采购部门</div>
<div class="th" style="left:179px;width:113px">单据号</div>
<div class="th" style="left:292px;width:112px">制定者</div>
<div class="th" style="left:404px;width:113px">制定科室</div>
<div class="th" style="left:517px;width:157px">计划时间</div>
<div class="th" style="left:674px;width:113px">审核人</div>
<div class="th" style="left:787px;width:112px;text-align:left;padding-left:4px"><svg style="position:relative;display:inline-block;vertical-align:-2px;margin-right:2px" width="15" height="15" viewBox="0 0 15 15"><path d="M10 2 H3.5 A2.5 2.5 0 0 0 1 4.5 V11.5 A2.5 2.5 0 0 0 3.5 14 H10.5 A2.5 2.5 0 0 0 13 11.5 V6.5" stroke="#000" stroke-width="1.3" fill="none"/><path d="M6.5 9.5 L14 1.5" stroke="#000" stroke-width="2.2" fill="none"/></svg>采购主题...</div>
</div>
<div class="abs" style="left:563px;top:341px;width:898px;height:32px;border:2px solid #f00"></div>
<div class="abs" style="left:563px;top:340px;width:898px;height:34px;line-height:33px">
<div class="td" style="left:0px;width:67px;text-align:center;">1</div>
<div class="td" style="left:67px;width:112px;">西药库</div>
<div class="td" style="left:179px;width:113px;">20632</div>
<div class="td" style="left:292px;width:112px;">周肖倩</div>
<div class="td" style="left:404px;width:113px;">西药库</div>
<div class="td" style="left:517px;width:157px;">25-10-16 14:43</div>
<div class="td" style="left:674px;width:113px;"></div>
<div class="td" style="left:787px;width:112px;"></div>
</div>
<div class="abs" style="left:544px;top:425px;width:1376px;height:5px;border-top:1px solid #dcdcdc;border-bottom:1px solid #dcdcdc;background:#fafafa"></div>
<div class="abs" style="left:1226px;top:426px;width:16px;height:3px;border-left:1px solid #ccc;border-right:1px solid #ccc"></div><div class="abs" style="left:1230px;top:426px;width:7px;height:3px;border-left:1px solid #ccc;border-right:1px solid #ccc"></div>
<div class="abs" style="left:550px;top:443px;width:1364px;height:352px;border:1px solid #dcdcdc"></div>
<div class="t" style="left:571px;top:434px;padding:0 8px;background:#fff;font-weight:700">采购明细信息</div>
<div class="inp" style="left:562px;top:463px;width:193px;background:#eee"></div>
<div class="btn" style="left:766px;top:462px;width:54px">增 加</div>
<div class="btn" style="left:826px;top:462px;width:54px">删 除</div>
<div class="btn" style="left:885px;top:462px;width:54px">保 存</div>
<div class="inp" style="left:944px;top:463px;width:193px;background:#eaf2fd;border-color:#d6e2f2"></div>
<div class="btn pri" style="left:1155px;top:462px;width:54px">定 位</div>
<div class="btn" style="left:1215px;top:462px;width:54px">选 项</div>
<div class="btn" style="left:1274px;top:462px;width:54px">导 出</div>
<div class="btn" style="left:1333px;top:462px;width:54px">还 原</div>
<div class="abs" style="left:562px;top:500px;width:1340px;height:282px;border:1px solid #e3e3e3;background:#fff"></div>
<div class="abs" style="left:563px;top:501px;width:1338px;height:33px;background:#f5f5f5;line-height:31px;overflow:hidden">
<div class="th" style="left:-9px;width:112px">当月已入库量</div>
<div class="th" style="left:103px;width:113px"><svg style="position:relative;display:inline-block;vertical-align:-2px;margin-right:2px" width="15" height="15" viewBox="0 0 15 15"><path d="M10 2 H3.5 A2.5 2.5 0 0 0 1 4.5 V11.5 A2.5 2.5 0 0 0 3.5 14 H10.5 A2.5 2.5 0 0 0 13 11.5 V6.5" stroke="#000" stroke-width="1.3" fill="none"/><path d="M6.5 9.5 L14 1.5" stroke="#000" stroke-width="2.2" fill="none"/></svg>计划数量</div>
<div class="th" style="left:216px;width:67px">单位</div>
<div class="th" style="left:283px;width:90px">库存数量</div>
<div class="th" style="left:373px;width:90px">库存上限</div>
<div class="th" style="left:463px;width:90px">库存下限</div>
<div class="th" style="left:553px;width:90px">全院库存</div>
<div class="th" style="left:643px;width:90px">上月使用量</div>
<div class="th" style="left:733px;width:135px">上月全院使用量</div>
<div class="th" style="left:868px;width:113px"><svg style="position:relative;display:inline-block;vertical-align:-2px;margin-right:2px" width="15" height="15" viewBox="0 0 15 15"><path d="M10 2 H3.5 A2.5 2.5 0 0 0 1 4.5 V11.5 A2.5 2.5 0 0 0 3.5 14 H10.5 A2.5 2.5 0 0 0 13 11.5 V6.5" stroke="#000" stroke-width="1.3" fill="none"/><path d="M6.5 9.5 L14 1.5" stroke="#000" stroke-width="2.2" fill="none"/></svg>备注</div>
<div class="th" style="left:981px;width:90px">中标期</div>
<div class="th" style="left:1071px;width:202px">供应商</div>
<div class="th" style="left:1273px;width:100px">进货价</div>
</div>
<div class="abs" style="left:563px;top:535px;width:1320px;height:2px;background:#f00"></div>
<div class="abs" style="left:563px;top:565px;width:1320px;height:2px;background:#f00"></div>
<div class="abs" style="left:563px;top:534px;width:1320px;height:195px;overflow:hidden">
<div class="row" style="top:0px;width:1320px;height:34px;line-height:33px">
<div class="td" style="left:-14px;width:117px"></div>
<div class="td r" style="left:103px;width:113px">20</div>
<div class="td" style="left:216px;width:67px">瓶</div>
<div class="td" style="left:283px;width:90px">10</div>
<div class="td r" style="left:373px;width:90px">21</div>
<div class="td r" style="left:463px;width:90px">21</div>
<div class="td" style="left:553px;width:90px">44.17</div>
<div class="td" style="left:643px;width:90px">10</div>
<div class="td" style="left:733px;width:135px"></div>
<div class="td" style="left:868px;width:113px"></div>
<div class="td" style="left:981px;width:90px"></div>
<div class="td" style="left:1071px;width:202px">南平鹭燕医药有限公司</div>
<div class="td" style="left:1273px;width:100px"></div>
</div>
<div class="row" style="top:34px;width:1320px;height:33px;line-height:32px">
<div class="td" style="left:-14px;width:117px"></div>
<div class="td r" style="left:103px;width:113px">10</div>
<div class="td" style="left:216px;width:67px">盒</div>
<div class="td" style="left:283px;width:90px">0</div>
<div class="td r" style="left:373px;width:90px">1000000</div>
<div class="td r" style="left:463px;width:90px">0</div>
<div class="td" style="left:553px;width:90px">0</div>
<div class="td" style="left:643px;width:90px">0</div>
<div class="td" style="left:733px;width:135px"></div>
<div class="td" style="left:868px;width:113px"></div>
<div class="td" style="left:981px;width:90px"></div>
<div class="td" style="left:1071px;width:202px">南平鹭燕医药有限公司</div>
<div class="td" style="left:1273px;width:100px"></div>
</div>
<div class="row" style="top:67px;width:1320px;height:34px;line-height:33px">
<div class="td" style="left:-14px;width:117px"></div>
<div class="td r" style="left:103px;width:113px">10</div>
<div class="td" style="left:216px;width:67px">瓶</div>
<div class="td" style="left:283px;width:90px">0</div>
<div class="td r" style="left:373px;width:90px">1000000</div>
<div class="td r" style="left:463px;width:90px">0</div>
<div class="td" style="left:553px;width:90px">0</div>
<div class="td" style="left:643px;width:90px">0</div>
<div class="td" style="left:733px;width:135px"></div>
<div class="td" style="left:868px;width:113px"></div>
<div class="td" style="left:981px;width:90px"></div>
<div class="td" style="left:1071px;width:202px">国药控股南平新力量有限...</div>
<div class="td" style="left:1273px;width:100px"></div>
</div>
<div class="row" style="top:101px;width:1320px;height:34px;line-height:33px">
<div class="td" style="left:-14px;width:117px"></div>
<div class="td r" style="left:103px;width:113px">10</div>
<div class="td" style="left:216px;width:67px">盒</div>
<div class="td" style="left:283px;width:90px">0</div>
<div class="td r" style="left:373px;width:90px">1000000</div>
<div class="td r" style="left:463px;width:90px">0</div>
<div class="td" style="left:553px;width:90px">25</div>
<div class="td" style="left:643px;width:90px">0</div>
<div class="td" style="left:733px;width:135px"></div>
<div class="td" style="left:868px;width:113px"></div>
<div class="td" style="left:981px;width:90px"></div>
<div class="td" style="left:1071px;width:202px">南平鹭燕医药有限公司</div>
<div class="td" style="left:1273px;width:100px"></div>
</div>
<div class="row" style="top:135px;width:1320px;height:34px;line-height:33px">
<div class="td" style="left:-14px;width:117px"></div>
<div class="td r" style="left:103px;width:113px">20</div>
<div class="td" style="left:216px;width:67px">支</div>
<div class="td" style="left:283px;width:90px">60</div>
<div class="td r" style="left:373px;width:90px">84</div>
<div class="td r" style="left:463px;width:90px">84</div>
<div class="td" style="left:553px;width:90px">183</div>
<div class="td" style="left:643px;width:90px">0</div>
<div class="td" style="left:733px;width:135px"></div>
<div class="td" style="left:868px;width:113px"></div>
<div class="td" style="left:981px;width:90px"></div>
<div class="td" style="left:1071px;width:202px">南平鹭燕医药有限公司</div>
<div class="td" style="left:1273px;width:100px"></div>
</div>
<div class="row" style="top:169px;width:1320px;height:33px;line-height:32px">
<div class="td" style="left:-14px;width:117px;padding-left:8px">2400</div>
<div class="td r" style="left:103px;width:113px">240</div>
<div class="td" style="left:216px;width:67px">支</div>
<div class="td" style="left:283px;width:90px">3100</div>
<div class="td r" style="left:373px;width:90px">3560</div>
<div class="td r" style="left:463px;width:90px">3560</div>
<div class="td" style="left:553px;width:90px">5413</div>
<div class="td" style="left:643px;width:90px">0</div>
<div class="td" style="left:733px;width:135px"></div>
<div class="td" style="left:868px;width:113px"></div>
<div class="td" style="left:981px;width:90px"></div>
<div class="td" style="left:1071px;width:202px">国药控股南平新力量有限...</div>
<div class="td" style="left:1273px;width:100px"></div>
</div>
</div>
<div class="abs" style="left:563px;top:729px;width:1338px;height:34px;background:#f8f8f8;border-top:1px solid #e3e3e3;border-bottom:1px solid #e3e3e3;overflow:hidden">
<div class="td" style="left:-14px;width:117px"></div>
<div class="td" style="left:103px;width:113px"></div>
<div class="td" style="left:216px;width:67px"></div>
<div class="td" style="left:283px;width:90px"></div>
<div class="td" style="left:373px;width:90px"></div>
<div class="td" style="left:463px;width:90px"></div>
<div class="td" style="left:553px;width:90px"></div>
<div class="td" style="left:643px;width:90px"></div>
<div class="td" style="left:733px;width:135px"></div>
<div class="td" style="left:868px;width:113px"></div>
<div class="td" style="left:981px;width:90px"></div>
<div class="td" style="left:1071px;width:202px"></div>
<div class="td" style="left:1273px;width:100px"></div>
</div>
<div class="abs" style="left:1883px;top:534px;width:18px;height:195px;background:#fafafa"></div>
<svg style="left:1886px;top:541px" width="13" height="8" viewBox="0 0 13 8"><path d="M0 8 L6.5 0.5 L13 8Z" fill="#8b8b8b"/></svg>
<div class="abs" style="left:1887px;top:557px;width:11px;height:21px;border-radius:6px;background:#8b8b8b"></div>
<svg style="left:1886px;top:714px" width="13" height="8" viewBox="0 0 13 8"><path d="M0 0 L6.5 7.5 L13 0Z" fill="#8b8b8b"/></svg>
<div class="abs" style="left:563px;top:763px;width:1338px;height:18px;background:#fafafa"></div>
<svg style="left:568px;top:766px" width="8" height="13" viewBox="0 0 8 13"><path d="M8 0 L0.5 6.5 L8 13Z" fill="#6b6b6b"/></svg>
<div class="abs" style="left:982px;top:767px;width:572px;height:11px;border-radius:6px;background:#8b8b8b"></div>
<svg style="left:1887px;top:766px" width="8" height="13" viewBox="0 0 8 13"><path d="M0 0 L7.5 6.5 L0 13Z" fill="#6b6b6b"/></svg>
<div class="abs" style="left:664px;top:500px;width:113px;height:37px;border:3px solid #f53c3c"></div>
<div class="abs" style="left:845px;top:499px;width:96px;height:34px;border:3px solid #f53c3c"></div>
<svg style="left:777px;top:490px" width="10" height="25" viewBox="0 0 10 25"><path d="M5 0.5 L9.5 8.5 H0.5Z M0.5 15 H9.5 L5 24Z" fill="#f53c3c"/></svg>
<div class="abs" style="left:544px;top:808px;width:1376px;height:6px;border-top:1px solid #dcdcdc;border-bottom:1px solid #dcdcdc;background:#fafafa"></div>
<div class="abs" style="left:1226px;top:809px;width:16px;height:4px;border-left:1px solid #ccc;border-right:1px solid #ccc"></div><div class="abs" style="left:1230px;top:809px;width:7px;height:4px;border-left:1px solid #ccc;border-right:1px solid #ccc"></div>
<div class="abs" style="left:556px;top:825px;width:1353px;height:163px;border:1px solid #e3e3e3;background:#fff"></div>
<div class="abs" style="left:557px;top:826px;width:1351px;height:33px;background:#f5f5f5;line-height:31px">
<div class="th" style="left:0px;width:179px">药房</div>
<div class="th" style="left:179px;width:90px">盘点序号</div>
<div class="th" style="left:269px;width:112px">库存上限</div>
<div class="th" style="left:381px;width:113px">库存下限</div>
<div class="th" style="left:494px;width:67px">单位</div>
<div class="th" style="left:561px;width:113px">预扣库存</div>
<div class="th" style="left:674px;width:112px">实际库存</div>
</div>
<div class="abs" style="left:557px;top:859px;width:785px;height:33px;border:2px solid #f00"></div>
<div class="abs" style="left:557px;top:859px;width:785px;height:128px;overflow:hidden">
<div class="row" style="top:0px;width:785px;height:34px;line-height:33px">
<div class="td" style="left:0px;width:179px;padding-left:2px">住院西药房</div>
<div class="td" style="left:179px;width:90px">1</div>
<div class="td r" style="left:269px;width:112px">2.26</div>
<div class="td r" style="left:381px;width:113px">1.13</div>
<div class="td" style="left:494px;width:67px">瓶</div>
<div class="td" style="left:561px;width:113px">23瓶62片</div>
<div class="td" style="left:674px;width:112px">23瓶62片</div>
</div>
<div class="row" style="top:34px;width:785px;height:33px;line-height:32px">
<div class="td" style="left:0px;width:179px;padding-left:2px">门诊西药房</div>
<div class="td" style="left:179px;width:90px">1</div>
<div class="td r" style="left:269px;width:112px">8.02</div>
<div class="td r" style="left:381px;width:113px">4.01</div>
<div class="td" style="left:494px;width:67px">瓶</div>
<div class="td" style="left:561px;width:113px">10瓶55片</div>
<div class="td" style="left:674px;width:112px">10瓶55片</div>
</div>
<div class="row" style="top:67px;width:785px;height:34px;line-height:33px">
<div class="td" style="left:0px;width:179px;padding-left:2px">崇阳药房</div>
<div class="td" style="left:179px;width:90px">1</div>
<div class="td r" style="left:269px;width:112px">1000000</div>
<div class="td r" style="left:381px;width:113px">0</div>
<div class="td" style="left:494px;width:67px">瓶</div>
<div class="td" style="left:561px;width:113px">0</div>
<div class="td" style="left:674px;width:112px">0</div>
</div>
<div class="row" style="top:101px;width:785px;height:33px;line-height:32px">
<div class="td" style="left:0px;width:179px;padding-left:2px">双通道药房(作废)</div>
<div class="td" style="left:179px;width:90px">1</div>
<div class="td r" style="left:269px;width:112px">1000000</div>
<div class="td r" style="left:381px;width:113px">0</div>
<div class="td" style="left:494px;width:67px">瓶</div>
<div class="td" style="left:561px;width:113px">0</div>
<div class="td" style="left:674px;width:112px">0</div>
</div>
</div>
<div class="abs" style="left:1890px;top:859px;width:18px;height:128px;background:#fafafa"></div>
<svg style="left:1893px;top:866px" width="13" height="8" viewBox="0 0 13 8"><path d="M0 8 L6.5 0.5 L13 8Z" fill="#6b6b6b"/></svg>
<div class="abs" style="left:1894px;top:882px;width:11px;height:25px;border-radius:6px;background:#8b8b8b"></div>
<svg style="left:1893px;top:972px" width="13" height="8" viewBox="0 0 13 8"><path d="M0 0 L6.5 7.5 L13 0Z" fill="#6b6b6b"/></svg>
<div class="t" style="left:1593px;top:926px;font-size:24px;line-height:32px;color:#bdbdbd;font-weight:400;letter-spacing:1.6px">激活 Windows</div>
<div class="t" style="left:1593px;top:958px;font-size:17px;line-height:24px;color:#bdbdbd;font-weight:400;letter-spacing:1px">转到“设置”以激活 Windows。</div>
</div></body></html>
